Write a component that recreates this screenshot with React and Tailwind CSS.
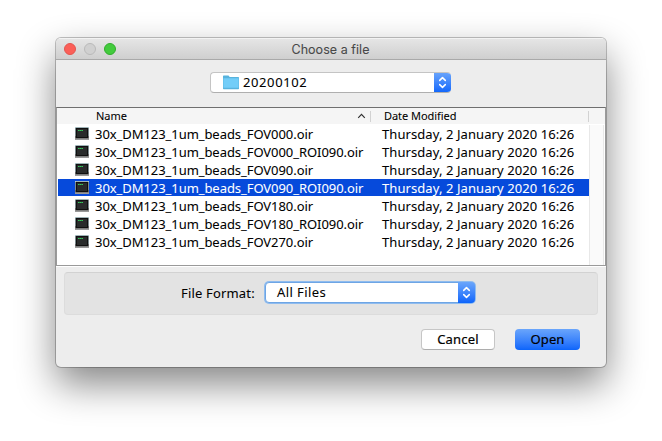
const FILES = [
  { name: '30x_DM123_1um_beads_FOV000.oir' },
  { name: '30x_DM123_1um_beads_FOV000_ROI090.oir' },
  { name: '30x_DM123_1um_beads_FOV090.oir' },
  { name: '30x_DM123_1um_beads_FOV090_ROI090.oir', selected: true },
  { name: '30x_DM123_1um_beads_FOV180.oir' },
  { name: '30x_DM123_1um_beads_FOV180_ROI090.oir' },
  { name: '30x_DM123_1um_beads_FOV270.oir' },
];

function FileIcon() {
  return (
    <svg width="14" height="13" viewBox="0 0 14 13" className="block shrink-0">
      <rect width="14" height="13" fill="#c3dde2" />
      <path d="M0 9H14V13H0Z" fill="#9a9a9a" />
      <rect x="0.6" y="0.8" width="12.8" height="10.4" fill="#101010" />
      <rect x="2" y="2" width="10" height="8" fill="#292b2b" />
      <path d="M3 3H4.7V4H3ZM5 3H6.4V4H5ZM6.7 3H8V4H6.7Z" fill="#35c95b" />
    </svg>
  );
}

function Stepper({ className }) {
  return (
    <div className={'flex items-center justify-center bg-linear-to-b from-[#6aa5fb] to-[#0a64fb] ' + className}>
      <svg width="9" height="13" viewBox="0 0 9 13" fill="none" stroke="white" strokeWidth="1.5" strokeLinecap="round" strokeLinejoin="round">
        <path d="M1.7 4.4 4.5 1.6 7.3 4.4M1.7 8.6 4.5 11.4 7.3 8.6" />
      </svg>
    </div>
  );
}

function Row({ file }) {
  return (
    <div className="h-[18px] pl-px">
      <div className={'flex h-[17px] w-[531px] ' + (file.selected ? 'bg-[#064adb] text-white' : 'text-black')}>
        <div className="flex w-[324px] pl-[17px]">
          <div className="pt-0.5">
            <FileIcon />
          </div>
          <span className="ml-1.5 whitespace-nowrap leading-[19px] tracking-[-0.06px]">{file.name}</span>
        </div>
        <span className="whitespace-nowrap leading-[19px] tracking-[0.08px]">Thursday, 2 January 2020 16:26</span>
      </div>
    </div>
  );
}

export default function App() {
  return (
    <div className="h-[441px] w-[662px] overflow-hidden bg-white pl-[56px] pt-[38px] font-['Noto_Sans',sans-serif] text-[13px] text-black [-webkit-text-stroke:0.06px_currentColor]">
      <div className="flex h-[329px] w-[550px] flex-col overflow-hidden rounded-[5px] bg-[#ededed] shadow-[0_0_0_1px_rgba(0,0,0,0.23),0_17px_38px_rgba(0,0,0,0.48)]">
        <div className="flex h-[22px] shrink-0 items-center border-b border-[#a9a9a9] border-t border-t-[#f3f3f3] bg-linear-to-b from-[#e5e5e5] to-[#cfcfcf] pl-2">
          <div className="flex w-[60px] gap-2">
            <i className="size-3 rounded-full border border-[#e2554f] bg-[#fb5f58]" />
            <i className="size-3 rounded-full border border-[#b9b9b9] bg-[#d0d0d0]" />
            <i className="size-3 rounded-full border border-[#31ad2c] bg-[#43cb3d]" />
          </div>
          <span className="w-[413px] pt-0.5 text-center font-['Inter',sans-serif] text-[12.5px] leading-5 tracking-[0.05px] text-[#484848]">Choose a file</span>
        </div>

        <div className="flex h-[47px] shrink-0 pl-[154px] pt-3">
          <div className="flex h-[21px] w-[241px] overflow-hidden rounded-[4px] border border-r-0 border-[#c4c4c4] border-b-[#afafaf] bg-white">
            <div className="flex flex-1 pl-3">
              <svg width="16" height="15" viewBox="0 0 16 15" className="mt-0.5 block">
                <path d="M0 2.5V1.2Q0 .5.7.5H5.5L6.7 2H15.3Q16 2 16 2.7V13.6Q16 14.2 15.3 14.2H.7Q0 14.2 0 13.6Z" fill="#57b3dd" />
                <path d="M.4 3.3H15.6V12.8H.4Z" fill="#72cdf8" />
              </svg>
              <span className="ml-1 leading-[19px] tracking-[0.6px]">20200102</span>
            </div>
            <Stepper className="-my-px h-[21px] w-[17px]" />
          </div>
        </div>

        <div className="flex h-[159px] shrink-0 flex-col border border-[#9a9a9a] border-t-[#6f6f6f] bg-white">
          <div className="flex h-4 shrink-0 items-center bg-[#f5f5f5] text-[11px]">
            <div className="flex h-[11px] w-[314px] items-center justify-between border-r border-[#d2d2d2] pl-[39px] pr-1">
              <span>Name</span>
              <svg width="9" height="6" viewBox="0 0 9 6" fill="none" stroke="#333" strokeWidth="1.2">
                <path d="M1.2 4.8 4.5 1.4 7.8 4.8" />
              </svg>
            </div>
            <div className="flex h-[11px] w-[218px] items-center border-r border-[#d2d2d2] pl-[13px]">
              <span className="tracking-[-0.05px]">Date Modified</span>
            </div>
          </div>
          <div className="flex flex-1">
            <div className="w-[532px] pt-px">
              {FILES.map((f) => (
                <Row key={f.name} file={f} />
              ))}
            </div>
            <div className="mt-px w-[15px] border-l border-r border-[#e8e8e8] bg-[#fafafa]" />
          </div>
        </div>

        <div className="border-t border-white px-2 pt-[5px]">
          <div className="flex h-[43px] rounded-[4px] border border-[#dcdcdc] border-t-[#d2d2d2] bg-[#e3e3e3] pl-[116px] pt-[9px]">
            <span className="w-[84px] whitespace-nowrap leading-[23px] tracking-[0.17px]">File Format:</span>
            <div className="flex h-[21px] w-[210px] rounded-[4px] border border-[#6ea5e4] bg-white shadow-[0_0_0_1px_#8fbcef]">
              <span className="flex-1 pl-[11px] leading-[19px] tracking-[0.4px]">All Files</span>
              <Stepper className="-my-px -mr-px h-[21px] w-[17px] rounded-r-[4px]" />
            </div>
          </div>
        </div>

        <div className="flex gap-5 pl-[365px] pt-[14px] [-webkit-text-stroke:0.2px_currentColor]">
          <button className="h-[21px] w-[74px] rounded-[4px] border border-[#c6c6c6] border-b-[#adadad] bg-white leading-[19px] tracking-[0.2px]">Cancel</button>
          <button className="h-[21px] w-[65px] rounded-[4px] bg-linear-to-b from-[#6aa5fb] to-[#0a64fb] leading-[21px] tracking-[0.1px]">Open</button>
        </div>
      </div>
    </div>
  );
}
